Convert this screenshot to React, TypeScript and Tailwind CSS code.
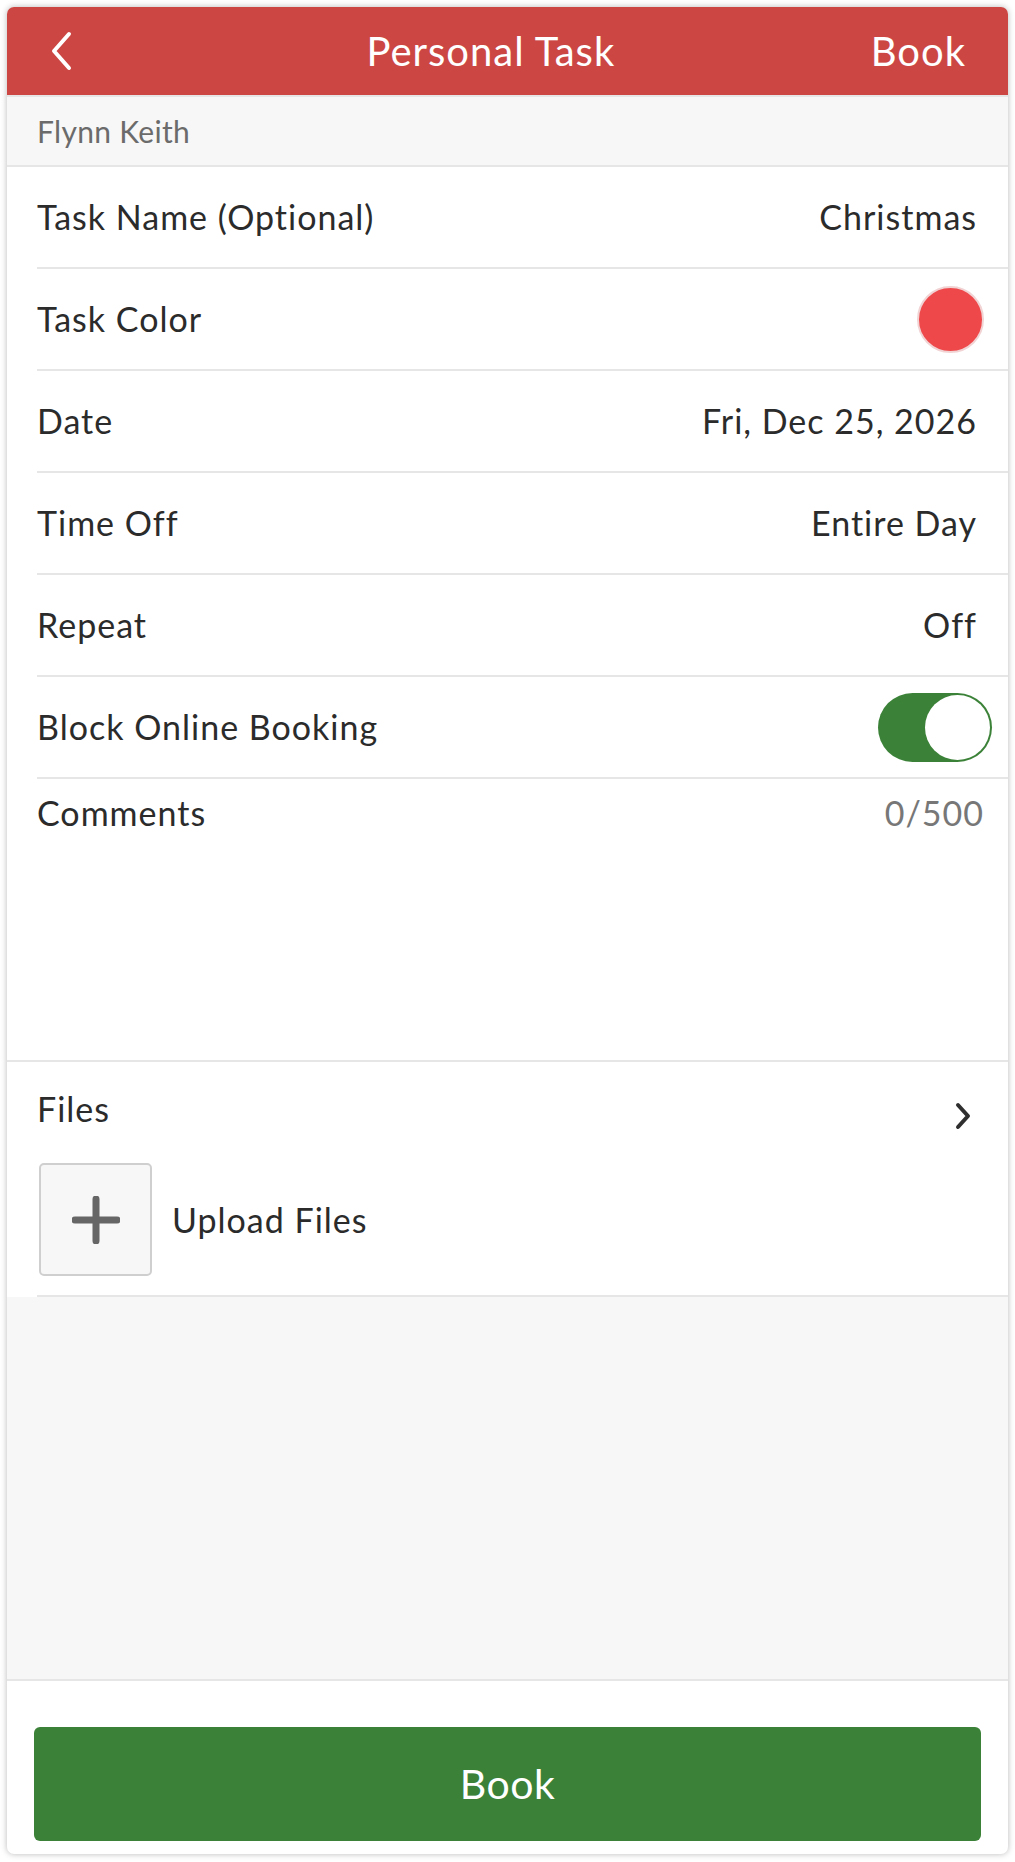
import * as React from "react";

const font = { fontFamily: "Lato, 'Open Sans', Arial, sans-serif" };

function Row({ label, children }: { label: string; children?: React.ReactNode }) {
  return (
    <div className="flex h-[102px] shrink-0 pl-[30px]">
      <div className="flex flex-1 items-center justify-between border-b-2 border-[#e6e6e6] pr-[31px]">
        <span className="text-[34px] leading-[40px] tracking-[1px] text-[#2b2b2b]">{label}</span>
        {children}
      </div>
    </div>
  );
}

function Value({ children }: { children: React.ReactNode }) {
  return <span className="text-[34px] leading-[40px] tracking-[1px] text-[#2b2b2b]">{children}</span>;
}

export default function App() {
  return (
    <div className="min-h-[1862px] bg-white p-[7px]" style={font}>
      <div className="flex h-[1847px] flex-col overflow-hidden rounded-[7px] bg-white shadow-[0_0_6px_rgba(0,0,0,0.28)]">
        {/* top bar */}
        <div className="flex h-[88px] shrink-0 items-center bg-[#cc4744] pl-[42px] pr-[42px] text-white">
          <svg width="24" height="40" viewBox="0 0 24 40" fill="none">
            <path d="M20 3 L5 20 L20 37" stroke="white" strokeWidth="4" strokeLinecap="round" strokeLinejoin="round" />
          </svg>
          <span className="ml-[38px] flex-1 text-center text-[40px] leading-[48px] tracking-[1px]">Personal Task</span>
          <span className="text-[40px] leading-[48px] tracking-[1px]">Book</span>
        </div>

        <div className="flex h-[72px] shrink-0 items-center border-y-2 border-[#e6e6e6] bg-[#f7f7f7] pl-[30px] text-[30px] tracking-[0.3px] text-[#6b6b6b]">
          Flynn Keith
        </div>

        <Row label="Task Name (Optional)">
          <Value>Christmas</Value>
        </Row>
        <Row label="Task Color">
          <span className="-mr-[7px] h-[67px] w-[67px] rounded-full border-2 border-[#f1d3d4] bg-[#ee484b]" />
        </Row>
        <Row label="Date">
          <Value>Fri, Dec 25, 2026</Value>
        </Row>
        <Row label="Time Off">
          <Value>Entire Day</Value>
        </Row>
        <Row label="Repeat">
          <Value>Off</Value>
        </Row>
        <Row label="Block Online Booking">
          <span className="-mr-[15px] flex h-[69px] w-[114px] items-center justify-end rounded-full bg-[#3b8238] p-[2px]">
            <span className="h-[65px] w-[65px] rounded-full bg-white" />
          </span>
        </Row>

        {/* comments */}
        <div className="flex h-[283px] shrink-0 items-start justify-between border-b-2 border-[#e6e6e6] pl-[30px] pr-[24px] pt-[14px]">
          <span className="text-[34px] leading-[40px] tracking-[1px] text-[#2b2b2b]">Comments</span>
          <span className="text-[34px] leading-[40px] tracking-[1px] text-[#777]">0/500</span>
        </div>

        {/* files */}
        <div className="flex h-[235px] shrink-0 pl-[30px]">
          <div className="flex flex-1 flex-col border-b-2 border-[#e6e6e6]">
            <div className="flex items-center justify-between pr-[36px] pt-[26px]">
              <span className="text-[34px] leading-[40px] tracking-[1px] text-[#2b2b2b]">Files</span>
              <svg width="18" height="28" viewBox="0 0 18 28" fill="none" className="mt-[14px]">
                <path d="M4 3 L14 14 L4 25" stroke="#2f2f2f" strokeWidth="4" strokeLinecap="round" strokeLinejoin="round" />
              </svg>
            </div>
            <div className="mt-[33px] flex items-center gap-[20px] pl-[2px]">
              <div className="flex h-[113px] w-[113px] items-center justify-center rounded-[5px] border-2 border-[#cfcfcf] bg-[#f7f7f7]">
                <svg width="48" height="48" viewBox="0 0 48 48">
                  <path d="M24 3 V45 M3 24 H45" stroke="#666" strokeWidth="7" strokeLinecap="round" />
                </svg>
              </div>
              <span className="text-[34px] leading-[40px] tracking-[1px] text-[#2b2b2b]">Upload Files</span>
            </div>
          </div>
        </div>

        <div className="flex-1 border-b-2 border-[#e6e6e6] bg-[#f7f7f7]" />

        {/* bottom */}
        <div className="h-[173px] shrink-0 px-[27px] pt-[46px]">
          <button className="flex h-[114px] w-full items-center justify-center rounded-[6px] bg-[#3b8238] text-[41px] tracking-[0.5px] text-white">
            Book
          </button>
        </div>
      </div>
    </div>
  );
}
